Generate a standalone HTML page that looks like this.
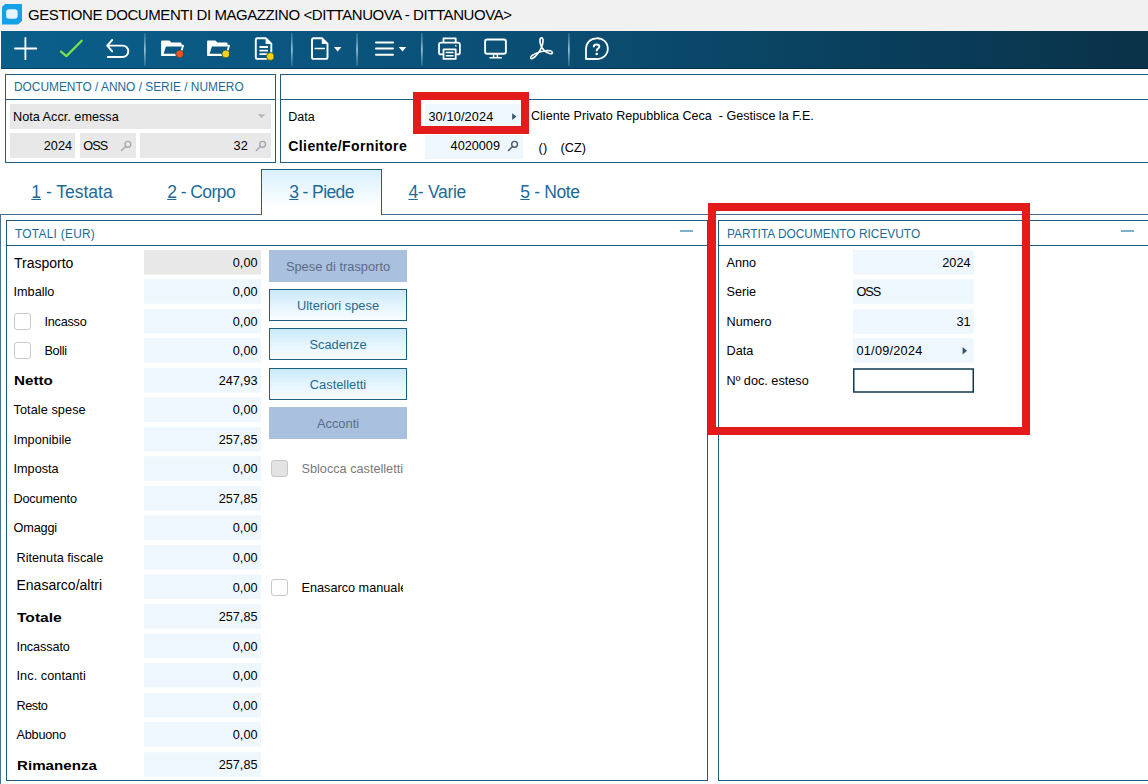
<!DOCTYPE html>
<html><head><meta charset="utf-8">
<style>
html,body{margin:0;padding:0;}
body{width:1148px;height:784px;position:relative;overflow:hidden;background:#fff;font-family:"Liberation Sans",sans-serif;font-size:12.7px;color:#000;}
.a{position:absolute;}
.t{position:absolute;white-space:nowrap;line-height:1;}
.bl{color:#1c6a96;}
.f{position:absolute;background:#eef7fd;}
.g{position:absolute;background:#e8e8e8;}
.v{position:absolute;white-space:nowrap;line-height:1;text-align:right;}
.pn{position:absolute;border:1px solid #1d5f7e;box-sizing:border-box;background:#fff;}
.hl{position:absolute;height:1px;background:#1d5f7e;}
.btn{position:absolute;box-sizing:border-box;border:1px solid #1d5f7e;background:linear-gradient(#c9e9fa,#e4f4fd 50%,#f8fcff);color:#1f6a8f;text-align:center;font-size:12.85px;}
.btd{position:absolute;box-sizing:border-box;background:#a9c0df;color:#5c6c84;text-align:center;font-size:12.85px;}
.cb{position:absolute;box-sizing:border-box;width:17px;height:17px;border:1.5px solid #c8c8c8;border-radius:3px;background:#fff;}
.sep{position:absolute;top:33px;width:2px;height:33px;background:linear-gradient(rgba(255,255,255,.15),rgba(255,255,255,.45),rgba(255,255,255,.15));}
</style></head><body>
<!-- title bar -->
<div class="a" style="left:0;top:0;width:1148px;height:31px;background:#f1f1f1;"></div>
<svg class="a" style="left:2px;top:4px" width="21" height="21" viewBox="0 0 21 21"><path d="M3 0H20V17L16 20.5H0V3Z" fill="#16a0e8"/><rect x="4.2" y="5.2" width="11.4" height="9.6" rx="2.8" fill="#e6f5fd"/></svg>
<div class="t" id="title" style="left:28px;top:6.5px;font-size:15px;letter-spacing:-0.43px;color:#000;">GESTIONE DOCUMENTI DI MAGAZZINO &lt;DITTANUOVA - DITTANUOVA&gt;</div>
<!-- toolbar -->
<div class="a" style="left:1px;top:31px;width:1147px;height:38px;background:linear-gradient(90deg,#0a5f8a 0%,#0a5680 25%,#0b4c70 52%,#093f5c 76%,#0a3249 100%);"></div>
<div class="a" style="left:1px;top:68px;width:1147px;height:1px;background:rgba(0,10,25,.35);"></div>
<svg class="a" style="left:0;top:31px" width="1148" height="38" viewBox="0 31 1148 38" fill="none" stroke="#fff" stroke-width="1.9" stroke-linecap="round" stroke-linejoin="round">
<defs><linearGradient id="sg" x1="0" y1="0" x2="0" y2="1"><stop offset="0" stop-color="#7fb4d0" stop-opacity=".25"/><stop offset=".5" stop-color="#a9d0e4" stop-opacity=".9"/><stop offset="1" stop-color="#7fb4d0" stop-opacity=".25"/></linearGradient></defs>
<!-- separators -->
<g stroke="none" fill="url(#sg)"><rect x="144" y="33" width="1.7" height="33"/><rect x="291" y="33" width="1.7" height="33"/><rect x="356.2" y="33" width="1.7" height="33"/><rect x="421" y="33" width="1.7" height="33"/><rect x="568" y="33" width="1.7" height="33"/></g>
<!-- plus -->
<path d="M15 48.5H36.3M25.4 38V59.2" stroke-width="1.8"/>
<!-- check -->
<path d="M61 51.6L66.4 56.1L81.7 40.8" stroke="#7be04a" stroke-width="2.3"/>
<!-- undo -->
<path d="M112.2 40L107.2 45.6L112.2 51.3M107.6 45.6H122.6A5.7 5.7 0 0 1 122.6 57H107.8" stroke-width="1.9"/>
<!-- folder 1 -->
<g stroke="none" fill="#fff" fill-rule="evenodd">
<path d="M161.1 41.3Q161.1 40.4 162 40.4H169.3L171.4 42.5H180.5Q181.5 42.5 181.5 43.5V44.8H183Q184.2 44.8 183.9 45.9L181.1 55.2Q180.8 56.1 179.9 56.1H162Q161.1 56.1 161.1 55.2ZM165.9 46.5L163.6 53.7H179.6L181.9 46.5Z"/>
<path transform="translate(46,0)" d="M161.1 41.3Q161.1 40.4 162 40.4H169.3L171.4 42.5H180.5Q181.5 42.5 181.5 43.5V44.8H183Q184.2 44.8 183.9 45.9L181.1 55.2Q180.8 56.1 179.9 56.1H162Q161.1 56.1 161.1 55.2ZM165.9 46.5L163.6 53.7H179.6L181.9 46.5Z"/>
</g>
<circle cx="179.6" cy="53.9" r="3.9" fill="#f2531c" stroke="#0b4f73" stroke-width=".8"/>
<circle cx="225.7" cy="53.9" r="3.9" fill="#fbd015" stroke="#0b4f3a" stroke-width=".8"/>
<!-- doc with lines -->
<path d="M257.3 38.3H266L271.3 43.6V57.3Q271.3 58.9 269.7 58.9H257.3Q255.8 58.9 255.8 57.3V39.9Q255.8 38.3 257.3 38.3Z" stroke-width="1.9"/>
<path d="M265.6 38V44H271.6Z" fill="#fff" stroke="none"/>
<path d="M259.5 47H268M259.5 50.6H268M259.5 54.1H268" stroke-width="1.9" stroke-linecap="butt"/>
<circle cx="270.3" cy="56.5" r="3.9" fill="#fbd015" stroke="#0b4f3a" stroke-width=".8"/>
<!-- doc dropdown -->
<path d="M313.6 38.3H322.2L327.5 43.6V57.3Q327.5 58.9 325.9 58.9H313.6Q312 58.9 312 57.3V39.9Q312 38.3 313.6 38.3Z" stroke-width="1.9"/>
<path d="M321.8 38V44H327.8Z" fill="#fff" stroke="none"/>
<path d="M315.3 48.5H324.2" stroke-width="1.7"/>
<path d="M334 46.9H341.4L337.7 51.4Z" fill="#fff" stroke="none"/>
<!-- menu -->
<path d="M376 42.5H393M376 48.6H393M376 54.7H393" stroke-width="2"/>
<path d="M398.8 46.9H406.2L402.5 51.4Z" fill="#fff" stroke="none"/>
<!-- printer -->
<path d="M443.5 42V38.3H455.7V42M443.2 54.4H441Q439 54.4 439 52.4V44.6Q439 42.6 441 42.6H457.8Q459.9 42.6 459.9 44.6V52.4Q459.9 54.4 457.8 54.4H456" stroke-width="1.8"/>
<path d="M443.5 49.4H455.7V58.9H443.5Z" stroke-width="1.8"/>
<path d="M446.3 52.6H452.9M446.3 55.7H452.9" stroke-width="1.5"/>
<circle cx="455.8" cy="45.7" r=".9" fill="#bfe3f5" stroke="none"/>
<!-- monitor -->
<rect x="485.1" y="39.5" width="20.8" height="14.3" rx="2" stroke-width="1.9"/>
<path d="M493.6 54V57.6M497.4 54V57.6M490 57.8H501.2" stroke-width="1.6"/>
<!-- acrobat -->
<path transform="translate(529.2,36)" d="M12.5 1.8C14.5 1.8 14 7 12.5 11C10.5 16 6 21.5 3 22.6C1 23.2 1 21 3 19.4C8 15.8 17 14 21 14.8C24 15.4 24 18.2 21 17.7C17 17 12.5 13 11.5 9C10.3 5 10.5 1.8 12.5 1.8Z" stroke-width="1.65"/>
<!-- help -->
<path d="M596.4 38.3A10.4 10.4 0 1 1 596.4 59H586V48.7A10.4 10.4 0 0 1 596.4 38.3Z" stroke-width="1.8"/>
<path d="M593.8 46.4Q593.9 44.4 596.6 44.4Q599.3 44.4 599.3 46.5Q599.3 47.8 597.9 48.6Q596.7 49.3 596.7 50.6" stroke-width="2"/>
<circle cx="596.7" cy="53.9" r="1.25" fill="#fff" stroke="none"/>
</svg>

<!-- panel 1 -->
<div class="pn" style="left:5px;top:74px;width:271px;height:89px;"></div>
<div class="hl" style="left:5px;top:99px;width:271px;"></div>
<div class="t bl" style="left:14px;top:82px;font-size:11.9px;">DOCUMENTO / ANNO / SERIE / NUMERO</div>
<div class="g" style="left:10px;top:104px;width:261px;height:25px;"></div>
<div class="t" style="left:13px;top:111px;">Nota Accr. emessa</div>
<div class="g" style="left:10px;top:133px;width:65px;height:25px;"></div>
<div class="g" style="left:80px;top:133px;width:56px;height:25px;"></div>
<div class="g" style="left:140px;top:133px;width:131px;height:25px;"></div>
<div class="v" style="right:1076px;top:140px;">2024</div>
<div class="t" style="left:83.3px;top:140px;letter-spacing:-.9px;">OSS</div>
<div class="v" style="right:900.3px;top:140px;">32</div>
<!-- panel 2 -->
<div class="pn" style="left:280px;top:74px;width:880px;height:89px;"></div>
<div class="hl" style="left:280px;top:99px;width:870px;"></div>
<div class="t" style="left:288.3px;top:110.5px;font-size:12.5px;">Data</div>
<div class="t" style="left:288.3px;top:139px;font-weight:bold;font-size:14px;letter-spacing:.4px;">Cliente/Fornitore</div>
<div class="f" style="left:425px;top:104px;width:98px;height:25px;"></div>
<div class="f" style="left:425px;top:135px;width:98px;height:24px;"></div>
<div class="t" style="left:428.4px;top:110.5px;letter-spacing:.15px;">30/10/2024</div>
<div class="v" style="right:648px;top:140px;">4020009</div>
<div class="t" style="left:531px;top:109.5px;font-size:12.57px;">Cliente Privato Repubblica Ceca&nbsp; - Gestisce la F.E.</div>
<div class="t" style="left:538.4px;top:141.5px;letter-spacing:.5px;">()</div><div class="t" style="left:560.6px;top:141.5px;">(CZ)</div>
<div class="a" style="left:413px;top:92px;width:116px;height:41.5px;box-sizing:border-box;border:8px solid #e31b1d;"></div>

<svg class="a" style="left:0;top:100px" width="600" height="70" viewBox="0 100 600 70" fill="none" stroke-linecap="round">
<path d="M257.8 114.2H265.2L261.5 117.9Z" fill="#b4b6c0"/>
<g stroke="#a6a8b2" stroke-width="1.4"><circle cx="127.9" cy="144.3" r="2.9"/><path d="M125.8 146.4L121.4 150.6"/><circle cx="262.6" cy="144.3" r="2.9"/><path d="M260.5 146.4L256.3 150.6"/></g>
<g stroke="#46586e" stroke-width="1.4"><circle cx="514.6" cy="144.3" r="2.9"/><path d="M512.5 146.4L508.5 150.5"/></g>
<path d="M512.2 113.2L516.4 116.6L512.2 120Z" fill="#3a5068"/>
</svg>
<!-- tabs -->
<div class="hl" style="left:0;top:214px;width:1148px;background:#4a6f8e;"></div>
<div class="a" style="left:261px;top:169px;width:121px;height:46px;box-sizing:border-box;border:1px solid #1d5f7e;border-bottom:none;background:linear-gradient(#d8f0fd,#fff 85%);"></div>
<div class="t bl" style="left:31.3px;top:184.3px;font-size:17.5px;"><u>1</u> - Testata</div>
<div class="t bl" style="left:167.2px;top:184.3px;font-size:17.5px;letter-spacing:-.55px;"><u>2</u> - Corpo</div>
<div class="t bl" style="left:289.2px;top:183.5px;font-size:17.5px;letter-spacing:-.6px;"><u>3</u> - Piede</div>
<div class="t bl" style="left:408.4px;top:184.3px;font-size:17.5px;letter-spacing:-.3px;"><u>4</u>- Varie</div>
<div class="t bl" style="left:520.3px;top:184.3px;font-size:17.5px;letter-spacing:-.35px;"><u>5</u> - Note</div>
<!-- left big panel -->
<div class="a" style="left:0;top:214px;width:1px;height:570px;background:#4a7193;"></div>
<div class="pn" style="left:6px;top:220px;width:702px;height:561px;"></div>
<div class="hl" style="left:6px;top:245px;width:702px;"></div>
<div class="t bl" style="left:15px;top:229px;font-size:11.9px;letter-spacing:.27px;">TOTALI (EUR)</div>
<div class="a" style="left:680px;top:230px;width:13px;height:2px;background:#7db1cb;"></div>
<svg class="a" style="left:0;top:0" width="300" height="784"><rect x="144" y="250" width="117" height="24.5" fill="#e8e8e8"/><rect x="144" y="279.25" width="117" height="24.5" fill="#eef7fd"/><rect x="144" y="309" width="117" height="24.5" fill="#eef7fd"/><rect x="144" y="338.25" width="117" height="24.5" fill="#eef7fd"/><rect x="144" y="368" width="117" height="24.5" fill="#eef7fd"/><rect x="144" y="397.25" width="117" height="24.5" fill="#eef7fd"/><rect x="144" y="427" width="117" height="24.5" fill="#eef7fd"/><rect x="144" y="456.25" width="117" height="24.5" fill="#eef7fd"/><rect x="144" y="486" width="117" height="24.5" fill="#eef7fd"/><rect x="144" y="515.25" width="117" height="24.5" fill="#eef7fd"/><rect x="144" y="545" width="117" height="24.5" fill="#eef7fd"/><rect x="144" y="574.5" width="117" height="24.5" fill="#eef7fd"/><rect x="144" y="604.25" width="117" height="24.5" fill="#eef7fd"/><rect x="144" y="633.75" width="117" height="24.5" fill="#eef7fd"/><rect x="144" y="663" width="117" height="24.5" fill="#eef7fd"/><rect x="144" y="693" width="117" height="24.5" fill="#eef7fd"/><rect x="144" y="722.25" width="117" height="24.5" fill="#eef7fd"/><rect x="144" y="752.25" width="117" height="24.5" fill="#eef7fd"/></svg>
<div class="v" style="right:890.5px;top:257px;">0,00</div>
<div class="t" style="left:14px;top:256px;font-size:14px;">Trasporto</div>
<div class="v" style="right:890.5px;top:286.25px;">0,00</div>
<div class="t" style="left:13.5px;top:286.25px;letter-spacing:0px;">Imballo</div>
<div class="v" style="right:890.5px;top:316px;">0,00</div>
<div class="t" style="left:44.5px;top:316px;letter-spacing:-0.25px;">Incasso</div>
<div class="cb" style="left:14px;top:312.5px;"></div>
<div class="v" style="right:890.5px;top:345.25px;">0,00</div>
<div class="t" style="left:44.5px;top:345.25px;letter-spacing:-0.35px;">Bolli</div>
<div class="cb" style="left:14px;top:341.75px;"></div>
<div class="v" style="right:890.5px;top:375px;">247,93</div>
<div class="t" style="left:13.5px;top:374.3px;font-size:13.4px;font-weight:bold;transform:scaleX(1.135);transform-origin:0 0;">Netto</div>
<div class="v" style="right:890.5px;top:404.25px;">0,00</div>
<div class="t" style="left:13.5px;top:404.25px;letter-spacing:0.08px;">Totale spese</div>
<div class="v" style="right:890.5px;top:434px;">257,85</div>
<div class="t" style="left:13.5px;top:434px;letter-spacing:0px;">Imponibile</div>
<div class="v" style="right:890.5px;top:463.25px;">0,00</div>
<div class="t" style="left:13.5px;top:463.25px;letter-spacing:0px;">Imposta</div>
<div class="v" style="right:890.5px;top:493px;">257,85</div>
<div class="t" style="left:13.5px;top:493px;letter-spacing:-0.18px;">Documento</div>
<div class="v" style="right:890.5px;top:522.25px;">0,00</div>
<div class="t" style="left:13.5px;top:522.25px;letter-spacing:-0.15px;">Omaggi</div>
<div class="v" style="right:890.5px;top:552px;">0,00</div>
<div class="t" style="left:16.5px;top:552px;letter-spacing:0px;">Ritenuta fiscale</div>
<div class="v" style="right:890.5px;top:581.5px;">0,00</div>
<div class="t" style="left:16.5px;top:577.5px;font-size:14px;">Enasarco/altri</div>
<div class="v" style="right:890.5px;top:611.25px;">257,85</div>
<div class="t" style="left:16.75px;top:610.55px;font-size:13.4px;font-weight:bold;transform:scaleX(1.165);transform-origin:0 0;">Totale</div>
<div class="v" style="right:890.5px;top:640.75px;">0,00</div>
<div class="t" style="left:16.5px;top:640.75px;letter-spacing:-0.12px;">Incassato</div>
<div class="v" style="right:890.5px;top:670px;">0,00</div>
<div class="t" style="left:16.5px;top:670px;letter-spacing:0.07px;">Inc. contanti</div>
<div class="v" style="right:890.5px;top:700px;">0,00</div>
<div class="t" style="left:16.5px;top:700px;letter-spacing:-0.44px;">Resto</div>
<div class="v" style="right:890.5px;top:729.25px;">0,00</div>
<div class="t" style="left:16.5px;top:729.25px;letter-spacing:-0.22px;">Abbuono</div>
<div class="v" style="right:890.5px;top:759.25px;">257,85</div>
<div class="t" style="left:16.5px;top:758.55px;font-size:13.4px;font-weight:bold;transform:scaleX(1.13);transform-origin:0 0;">Rimanenza</div>
<div class="btd" style="left:269px;top:250px;width:138px;height:32px;line-height:33.5px;">Spese di trasporto</div>
<div class="btn" style="left:269px;top:289px;width:138px;height:32px;line-height:32px;">Ulteriori spese</div>
<div class="btn" style="left:269px;top:328.4px;width:138px;height:32px;line-height:32px;">Scadenze</div>
<div class="btn" style="left:269px;top:368.2px;width:138px;height:32px;line-height:32px;">Castelletti</div>
<div class="btd" style="left:269px;top:407px;width:138px;height:32px;line-height:33.5px;">Acconti</div>
<div class="cb" style="left:270.8px;top:460px;background:#e3e3e3;"></div>
<div class="t" style="left:301.5px;top:462.5px;color:#7a7a7a;">Sblocca castelletti</div>
<div class="cb" style="left:270.8px;top:578.8px;"></div>
<div class="a" style="left:301.5px;top:577px;width:101.2px;height:20px;overflow:hidden;"><div class="t" style="left:0;top:4.5px;">Enasarco manuale</div></div>
<!-- right panel -->
<div class="pn" style="left:718px;top:220px;width:440px;height:561px;"></div>
<div class="hl" style="left:718px;top:245px;width:430px;"></div>
<div class="t bl" style="left:727px;top:229px;font-size:11.9px;">PARTITA DOCUMENTO RICEVUTO</div>
<div class="a" style="left:1121px;top:230px;width:13px;height:2px;background:#7db1cb;"></div>
<svg class="a" style="left:0;top:0" width="1148" height="784"><rect x="853" y="250" width="121" height="24.5" fill="#eef7fd"/><rect x="853" y="279.25" width="121" height="24.5" fill="#eef7fd"/><rect x="853" y="309.25" width="121" height="24.5" fill="#eef7fd"/><rect x="853" y="338.25" width="121" height="24.5" fill="#eef7fd"/><rect x="853.75" y="369.0" width="119.5" height="23" fill="#fff" stroke="#12384f" stroke-width="1.5"/></svg>
<div class="t" style="left:726.5px;top:257px;">Anno</div>
<div class="v" style="right:177.5px;top:257px;">2024</div>
<div class="t" style="left:726.5px;top:286.25px;">Serie</div>
<div class="t" style="left:856.5px;top:286.25px;letter-spacing:-1.1px;">OSS</div>
<div class="t" style="left:726.5px;top:316.25px;">Numero</div>
<div class="v" style="right:177.5px;top:316.25px;">31</div>
<div class="t" style="left:726.5px;top:345.25px;">Data</div>
<div class="t" style="left:856.5px;top:345.25px;letter-spacing:0.25px;">01/09/2024</div>
<div class="t" style="left:726.5px;top:375.25px;">Nº doc. esteso</div>
<svg class="a" style="left:960px;top:344px" width="10" height="14" viewBox="960 344 10 14"><path d="M962.6 347L967 350.7L962.6 354.4Z" fill="#3a5068"/></svg>
<div class="a" style="left:708px;top:203px;width:321.5px;height:231.5px;box-sizing:border-box;border:8px solid #e31b1d;"></div>
</body></html>
